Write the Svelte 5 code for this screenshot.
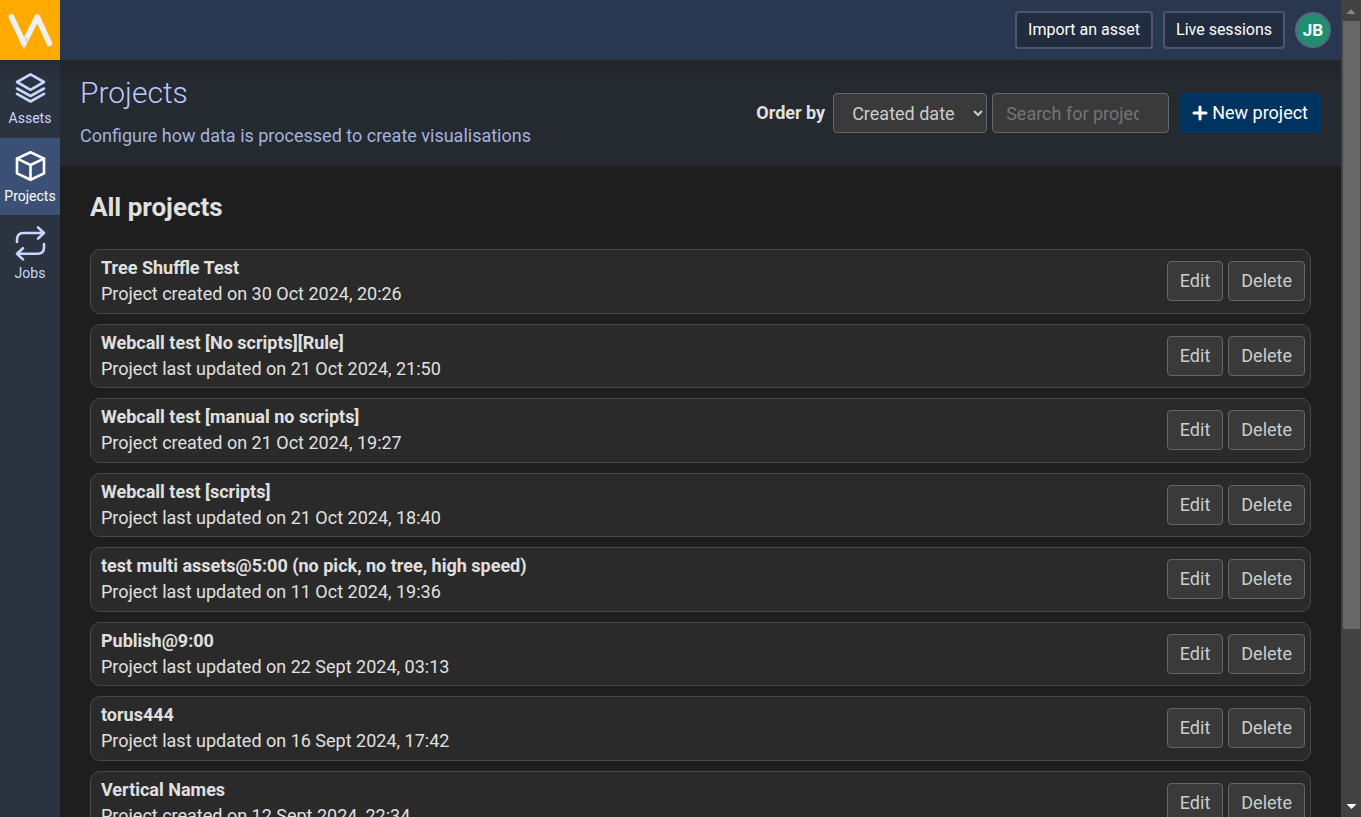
<script>
  const nav = [
    { label: 'Assets', icon: 'layers', active: false },
    { label: 'Projects', icon: 'cube', active: true },
    { label: 'Jobs', icon: 'repeat', active: false }
  ];

  const projects = [
    { name: 'Tree Shuffle Test', info: 'Project created on 30 Oct 2024, 20:26' },
    { name: 'Webcall test [No scripts][Rule]', info: 'Project last updated on 21 Oct 2024, 21:50' },
    { name: 'Webcall test [manual no scripts]', info: 'Project created on 21 Oct 2024, 19:27' },
    { name: 'Webcall test [scripts]', info: 'Project last updated on 21 Oct 2024, 18:40' },
    { name: 'test multi assets@5:00 (no pick, no tree, high speed)', info: 'Project last updated on 11 Oct 2024, 19:36' },
    { name: 'Publish@9:00', info: 'Project last updated on 22 Sept 2024, 03:13' },
    { name: 'torus444', info: 'Project last updated on 16 Sept 2024, 17:42' },
    { name: 'Vertical Names', info: 'Project created on 12 Sept 2024, 22:34' }
  ];
</script>

<div class="app">
  <aside>
    <a class="logo" href="#home" aria-label="Home">
      <svg viewBox="0 0 60 60" width="60" height="60" aria-hidden="true">
        <path d="M24 43.5 L37.3 17 L49.5 43.5" fill="none" stroke="#f0f0f0" stroke-width="5.6" stroke-linecap="round" stroke-linejoin="round" />
        <path d="M21.3 37 L24 43.5 L25.6 40" fill="none" stroke="#d6d6d6" stroke-width="5" stroke-linecap="round" />
        <path d="M11.5 17 L24 43.5" stroke="#f0f0f0" stroke-width="5.6" stroke-linecap="round" />
      </svg>
    </a>
    <nav>
      {#each nav as item}
        <a href="#{item.icon}" class:active={item.active}>
          <svg viewBox="0 0 32 36" width="32" height="36" fill="none" stroke="currentColor" stroke-width="2.6" stroke-linejoin="round" stroke-linecap="round" aria-hidden="true">
            {#if item.icon === 'layers'}
              <path d="M16.5 4.3 L30 12 L16.5 19.8 L3 12 Z" />
              <path d="M3 18.5 L16.5 26 L30 18.5" />
              <path d="M3 23.8 L16.5 31.5 L30 23.8" />
            {:else if item.icon === 'cube'}
              <path d="M16.5 4.3 L30 10.6 V25.4 L16.5 31.7 L3 25.4 V10.6 Z" />
              <path d="M3 10.6 L16.5 17 L30 10.6 M16.5 17 V31.7" />
            {:else}
              <path d="M3 17 V14.5 Q3 8 9.5 8 H30 M24 2.4 L30 8 L24 13.6" />
              <path d="M30 19 V22.3 Q30 28.8 23.5 28.8 H3 M9 23.2 L3 28.8 L9 34.4" />
            {/if}
          </svg>
          <span>{item.label}</span>
        </a>
      {/each}
    </nav>
  </aside>

  <div class="page">
    <header class="topbar">
      <button type="button">Import an asset</button>
      <button type="button">Live sessions</button>
      <button type="button" class="avatar">JB</button>
    </header>

    <section class="intro">
      <div>
        <h1>Projects</h1>
        <p>Configure how data is processed to create visualisations</p>
      </div>
      <div class="tools">
        <label for="order">Order by</label>
        <select id="order">
          <option>Created date</option>
          <option>Updated date</option>
        </select>
        <input type="search" placeholder="Search for projects" aria-label="Search for projects" />
        <button type="button" class="primary">
          <svg viewBox="0 0 16 18" width="16" height="18" aria-hidden="true">
            <path d="M8 3 V15 M2 9 H14" stroke="#fff" stroke-width="3" stroke-linecap="round" />
          </svg>
          New project
        </button>
      </div>
    </section>

    <main>
      <h2>All projects</h2>
      <ul>
        {#each projects as project}
          <li>
            <div>
              <h3>{project.name}</h3>
              <p>{project.info}</p>
            </div>
            <div class="actions">
              <button type="button">Edit</button>
              <button type="button">Delete</button>
            </div>
          </li>
        {/each}
      </ul>
    </main>
  </div>

  <div class="scrollbar" aria-hidden="true">
    <svg viewBox="0 0 20 21" width="20" height="21"><path d="M5.5 14 L10 9 L14.5 14 Z" fill="#868686" /></svg>
    <div class="track"><div class="thumb"></div></div>
    <svg viewBox="0 0 20 21" width="20" height="21"><path d="M5.5 8 L10.5 13 L15.5 8 Z" fill="#fff" /></svg>
  </div>
</div>

<style>
  :global(body) {
    background: #1e1e1e;
  }

  .app {
    display: grid;
    grid-template-columns: 60px minmax(0, 1fr) 20px;
    height: 100vh;
    overflow: hidden;
    color: #e0e0e0;
    font: 18px/26px Roboto, sans-serif;
  }

  h1, h2, h3, p, ul {
    margin: 0;
    padding: 0;
  }

  button, input, select {
    box-sizing: border-box;
    margin: 0;
    font: inherit;
  }

  aside {
    background: #2b3240;
  }

  .logo {
    display: block;
    height: 60px;
    background: #ffaa00;
  }

  .logo svg {
    display: block;
  }

  nav {
    display: flex;
    flex-direction: column;
    background: linear-gradient(#262b34, #2b3240 20px);
  }

  nav a {
    display: flex;
    flex-direction: column;
    align-items: center;
    gap: 2px;
    box-sizing: border-box;
    height: 77px;
    padding-top: 10px;
    color: #c8d7ff;
    font-size: 14px;
    line-height: 20px;
    text-decoration: none;
  }

  nav a:first-child {
    height: 78px;
  }

  nav a.active {
    background: #3c5075;
    color: #fff;
  }

  .page {
    overflow: hidden;
  }

  .topbar {
    display: flex;
    align-items: center;
    justify-content: flex-end;
    gap: 10px;
    height: 60px;
    padding-right: 10px;
    background: #293850;
  }

  .topbar button {
    height: 38px;
    padding: 0 11px;
    border: 2px solid #4c566a;
    border-radius: 4px;
    background: #212c3f;
    color: #fff;
    font-size: 16px;
  }

  .topbar .avatar {
    width: 36px;
    height: 36px;
    padding: 0;
    border-color: #586780;
    border-radius: 50%;
    background: #1f8f70;
    font-size: 17px;
    font-weight: 700;
  }

  .intro {
    display: flex;
    align-items: center;
    justify-content: space-between;
    box-sizing: border-box;
    height: 106px;
    padding: 0 20px;
    background: linear-gradient(#212529, #252930 20px);
  }

  h1 {
    margin-bottom: 13px;
    color: #bac8ff;
    font-size: 30px;
    font-weight: 300;
    line-height: 34px;
  }

  .intro p {
    margin-bottom: 2px;
    color: #a3b4dc;
  }

  .tools {
    display: flex;
    align-items: center;
    gap: 5px;
  }

  label {
    margin-right: 3px;
    font-weight: 700;
  }

  select, input, li button {
    height: 40px;
    border: 1px solid #666;
    border-radius: 4px;
    background: #3a3a3a;
    color: #ccc;
  }

  select {
    width: 154px;
    padding: 0 0 0 14px;
  }

  input {
    width: 177px;
    padding: 0 13px;
  }

  input::placeholder {
    color: #757575;
  }

  .primary {
    display: flex;
    align-items: center;
    gap: 4px;
    height: 40px;
    margin-left: 5px;
    padding: 0 13px;
    border: 0;
    border-radius: 4px;
    background: #00335f;
    color: #fff;
  }

  main {
    padding: 24px 30px;
  }

  h2 {
    margin-bottom: 25px;
    font-size: 26px;
    line-height: 34px;
  }

  ul {
    display: flex;
    flex-direction: column;
    gap: 10px;
    list-style: none;
  }

  li {
    display: flex;
    align-items: flex-start;
    justify-content: space-between;
    box-sizing: border-box;
    min-height: 64px;
    padding: 5px 5px 5px 10px;
    border: 1px solid #484848;
    border-radius: 10px;
    background: #2a2a2a;
  }

  li:nth-child(odd) {
    min-height: 65px;
  }

  h3 {
    font-size: 18px;
    line-height: 26px;
  }

  .actions {
    display: flex;
    gap: 5px;
    padding-top: 6px;
  }

  li button {
    padding: 0 12px;
  }

  .scrollbar {
    display: flex;
    flex-direction: column;
    background: #424242;
  }

  .scrollbar svg {
    display: block;
  }

  .track {
    flex: 1;
    padding: 0 1px 0 2px;
  }

  .thumb {
    height: 78.5%;
    background: #686868;
  }
</style>
